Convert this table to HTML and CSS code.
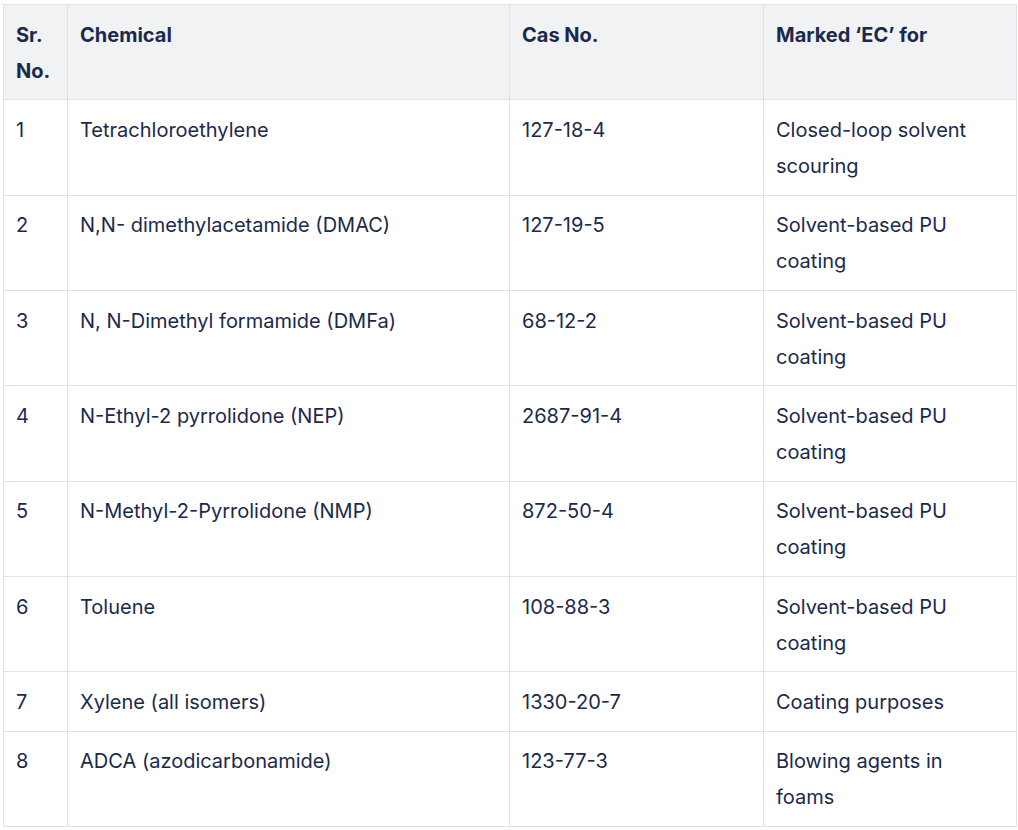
FILE: index.html
```html
<!DOCTYPE html>
<html>
<head>
<meta charset="utf-8">
<link rel="stylesheet" href="styles.css">
</head>
<body>
<table class="chem-table">
  <colgroup>
    <col class="c1"><col class="c2"><col class="c3"><col class="c4">
  </colgroup>
  <thead>
    <tr><th>Sr. No.</th><th>Chemical</th><th>Cas No.</th><th>Marked ‘EC’ for</th></tr>
  </thead>
  <tbody>
    <tr><td>1</td><td>Tetrachloroethylene</td><td>127-18-4</td><td>Closed-loop solvent scouring</td></tr>
    <tr><td>2</td><td>N,N- dimethylacetamide (DMAC)</td><td>127-19-5</td><td>Solvent-based PU coating</td></tr>
    <tr><td>3</td><td>N, N-Dimethyl formamide (DMFa)</td><td>68-12-2</td><td>Solvent-based PU coating</td></tr>
    <tr><td>4</td><td>N-Ethyl-2 pyrrolidone (NEP)</td><td>2687-91-4</td><td>Solvent-based PU coating</td></tr>
    <tr><td>5</td><td>N-Methyl-2-Pyrrolidone (NMP)</td><td>872-50-4</td><td>Solvent-based PU coating</td></tr>
    <tr><td>6</td><td>Toluene</td><td>108-88-3</td><td>Solvent-based PU coating</td></tr>
    <tr><td>7</td><td>Xylene (all isomers)</td><td>1330-20-7</td><td>Coating purposes</td></tr>
    <tr><td>8</td><td>ADCA (azodicarbonamide)</td><td>123-77-3</td><td>Blowing agents in foams</td></tr>
  </tbody>
</table>
</body>
</html>
```

FILE: styles.css
```css
html, body {
  margin: 0;
  padding: 0;
  background: #ffffff;
}

body {
  padding: 4px 2px 0 3px;
  font-family: Inter, "Noto Sans", "Liberation Sans", sans-serif;
  color: #1b2a4a;
}

.chem-table {
  width: 1013px;
  border-collapse: collapse;
  table-layout: fixed;
  font-size: 20px;
  line-height: 36px;
}

.c1 { width: 64px; }
.c2 { width: 442px; }
.c3 { width: 254px; }
.c4 { width: 253px; }

.chem-table th,
.chem-table td {
  border: 1px solid #dfe2e6;
  padding: 11.5px 12px 10.85px;
  text-align: left;
  vertical-align: top;
}

.chem-table th {
  background: #f1f2f4;
  font-weight: 700;
}

.chem-table td {
  font-weight: 400;
}
```
